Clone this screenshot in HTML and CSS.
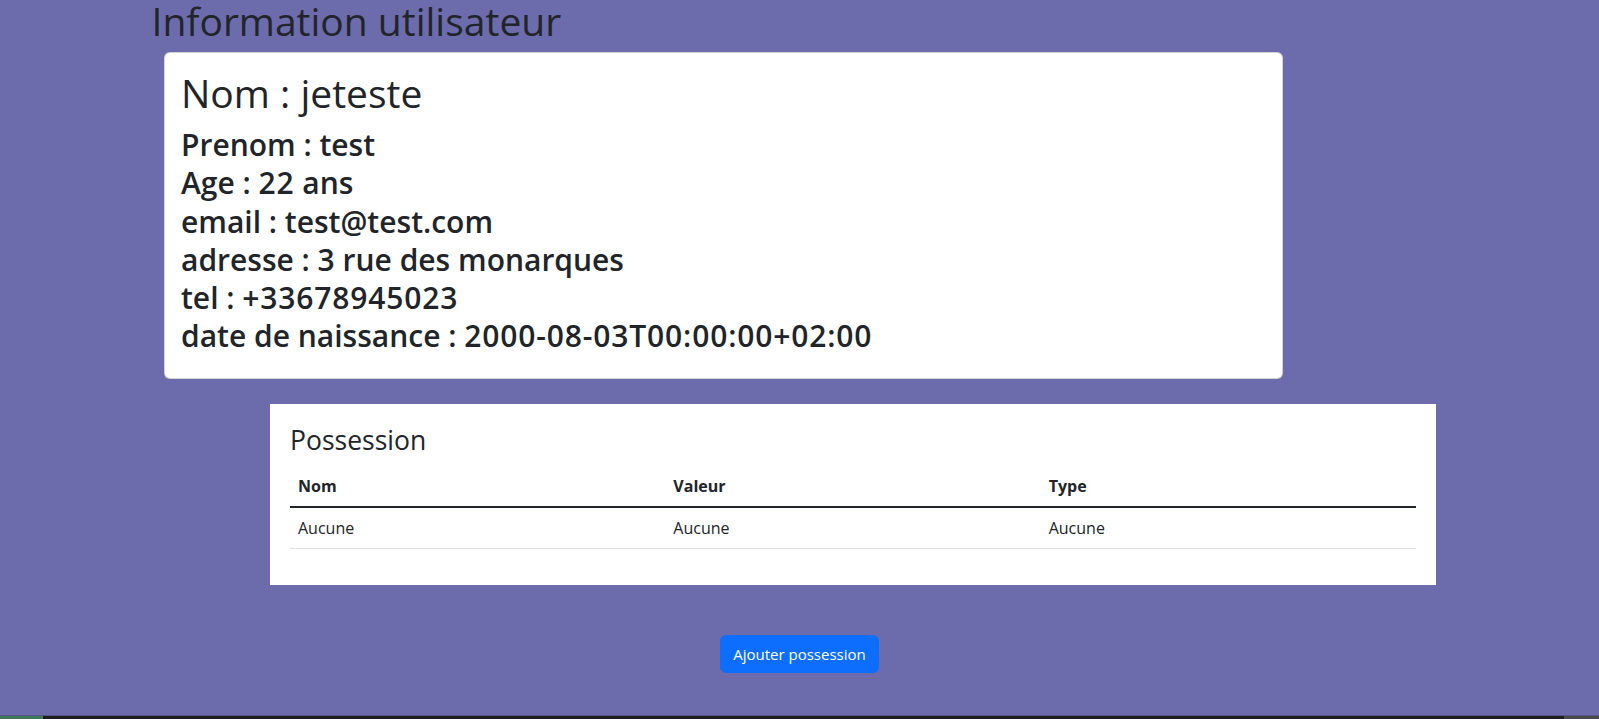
FILE: index.html
```html
<!DOCTYPE html>
<html lang="fr">
<head>
<meta charset="utf-8">
<title>Information utilisateur</title>
<link rel="stylesheet" href="styles.css">
</head>
<body>
<div class="container">
  <h1 class="page-title">Information utilisateur</h1>
  <div class="user-card">
    <h1 class="user-name">Nom : jeteste</h1>
    <div class="user-info">
      <h3 class="info-line">Prenom : test</h3>
      <h3 class="info-line">Age : <span class="num">22</span> ans</h3>
      <h3 class="info-line">email : test@test.com</h3>
      <h3 class="info-line">adresse : 3 rue des monarques</h3>
      <h3 class="info-line">tel : <span class="num">+33678945023</span></h3>
      <h3 class="info-line">date de naissance : <span class="num">2000-08-03T00:00:00+02:00</span></h3>
    </div>
  </div>
  <div class="possession-card">
    <h3 class="possession-title">Possession</h3>
    <table class="table">
      <thead>
        <tr><th>Nom</th><th>Valeur</th><th>Type</th></tr>
      </thead>
      <tbody>
        <tr><td>Aucune</td><td>Aucune</td><td>Aucune</td></tr>
      </tbody>
    </table>
  </div>
  <div class="actions">
    <button class="btn" type="button">Ajouter possession</button>
  </div>
</div>
<div class="taskbar">
  <span class="tb-green"></span>
  <span class="tb-dark"></span>
  <span class="tb-gray"></span>
</div>
</body>
</html>
```
FILE: styles.css
```css
html, body {
  margin: 0;
  padding: 0;
}
body {
  background: #6c6cac;
  color: #212529;
  font-family: "Segoe UI", "Open Sans", "Noto Sans", sans-serif;
  font-size: 16px;
  line-height: 1.5;
  height: 719px;
  overflow: hidden;
}
.container {
  width: 1296px;
  margin: 0 auto;
}
.page-title {
  font-size: 39px;
  font-weight: 500;
  line-height: 42px;
  margin: 0 0 10px 0;
}
.user-card {
  margin-left: 12.5px;
  width: 1119px;
  box-sizing: border-box;
  background: #fff;
  border: 1px solid rgba(0, 0, 0, 0.175);
  border-radius: 6px;
  padding: 16px;
  height: 327px;
}
.user-name {
  font-size: 39px;
  font-weight: 500;
  line-height: 48px;
  margin: 0 0 9px 0;
}
.info-line {
  font-size: 30px;
  font-weight: 600;
  line-height: 38.3px;
  margin: 0;
}
.num {
  letter-spacing: 0.85px;
}
.possession-card {
  margin-top: 25px;
  margin-left: 118.5px;
  width: 1166px;
  box-sizing: border-box;
  background: #fff;
  padding: 20px;
  height: 181px;
}
.possession-title {
  font-size: 26.5px;
  font-weight: 500;
  line-height: 33.6px;
  margin: 0 0 8px 0;
}
.table {
  width: 100%;
  border-collapse: collapse;
  table-layout: fixed;
}
.table th, .table td {
  text-align: left;
  padding: 8px;
  line-height: 24px;
}
.table th {
  font-weight: 700;
  border-bottom: 2px solid #212529;
}
.table td {
  font-weight: 400;
  border-bottom: 1px solid #dee2e6;
}
.actions {
  margin-top: 50px;
  display: flex;
  justify-content: center;
}
.btn {
  font-family: inherit;
  font-size: 15px;
  line-height: 24px;
  padding: 6px 12px;
  color: #fff;
  background: #0d6efd;
  border: 1px solid #0d6efd;
  border-radius: 6px;
}
.taskbar {
  position: fixed;
  left: 0;
  right: 0;
  bottom: 0;
  height: 3px;
  display: flex;
  border-top: 1px solid #55558a;
}
.tb-green {
  width: 43px;
  background: #3f7a5a;
}
.tb-dark {
  flex: 1;
  background: #1e1e1e;
}
.tb-gray {
  width: 35px;
  background: #4a4a4a;
}
```
